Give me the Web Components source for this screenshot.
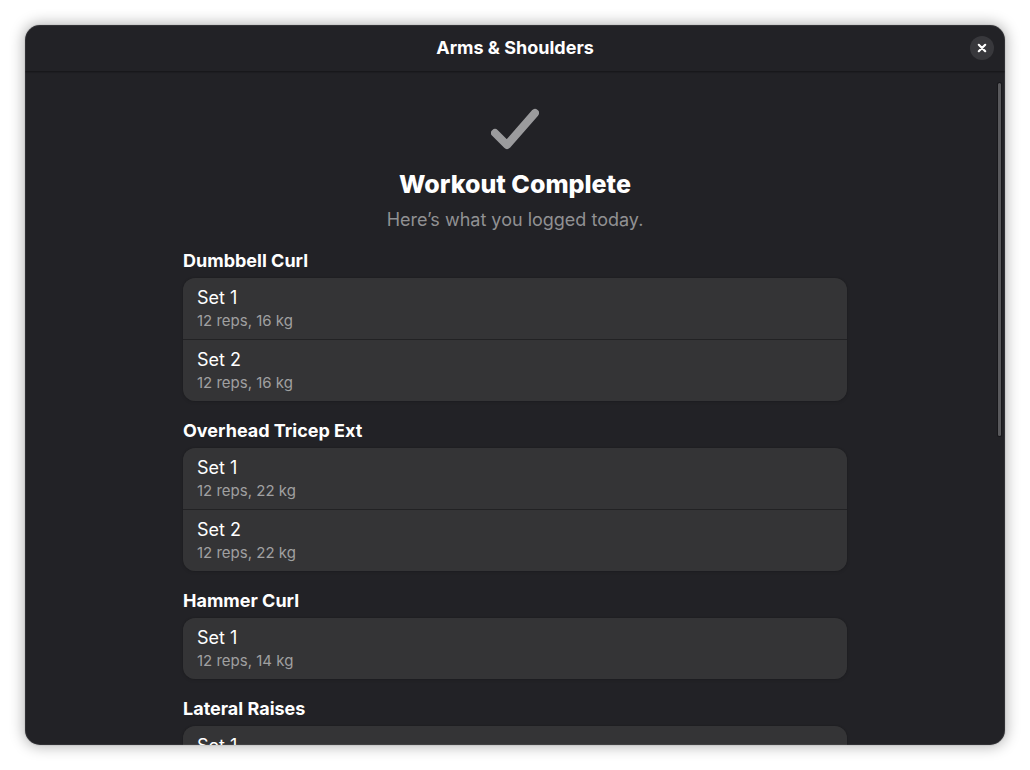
<!DOCTYPE html>
<html lang="en">
<head>
<meta charset="utf-8">
<title>Arms &amp; Shoulders</title>
<style>
    body {
        margin: 0;
        background: #fff;
        color: #fff;
        font-family: Inter, "Noto Sans", sans-serif;
        font-size: 18px;
        line-height: 24px;
    }
</style>
</head>
<body>
<app-window heading="Arms &amp; Shoulders">
    <status-header heading="Workout Complete">Here’s what you logged today.</status-header>
    <exercise-group heading="Dumbbell Curl">
        <set-row heading="Set 1">12 reps, 16 kg</set-row>
        <set-row heading="Set 2">12 reps, 16 kg</set-row>
    </exercise-group>
    <exercise-group heading="Overhead Tricep Ext">
        <set-row heading="Set 1">12 reps, 22 kg</set-row>
        <set-row heading="Set 2">12 reps, 22 kg</set-row>
    </exercise-group>
    <exercise-group heading="Hammer Curl">
        <set-row heading="Set 1">12 reps, 14 kg</set-row>
    </exercise-group>
    <exercise-group heading="Lateral Raises">
        <set-row heading="Set 1"></set-row>
    </exercise-group>
</app-window>

<script>
class AppWindow extends HTMLElement {
    constructor() {
        super();
        this.attachShadow({ mode: "open" });
    }

    connectedCallback() {
        this.shadowRoot.innerHTML = `
            <style>
                :host {
                    display: flex;
                    box-sizing: border-box;
                    height: 100vh;
                    padding: 25px;
                }

                .window {
                    position: relative;
                    flex: 1;
                    min-width: 0;
                    display: flex;
                    flex-direction: column;
                    overflow: hidden;
                    border-radius: 15px;
                    background: #222226;
                    box-shadow: 0 0 0 1px rgba(0,0,0,0.05), 0 0 14px 2px rgba(0,0,0,0.28);
                }

                .window::after {
                    content: "";
                    position: absolute;
                    inset: 0;
                    border-radius: 15px;
                    box-shadow: inset 0 0 0 1px rgba(255,255,255,0.07);
                    pointer-events: none;
                }

                header {
                    display: grid;
                    grid-template-columns: 1fr auto 1fr;
                    align-items: center;
                    height: 46px;
                    padding: 0 11px;
                    border-bottom: 1px solid #18181b;
                    box-shadow: 0 1px 1px rgba(0,0,0,0.12);
                }

                h1 {
                    grid-column: 2;
                    margin: 0;
                    font-size: 18px;
                    font-weight: 700;
                }

                button {
                    justify-self: end;
                    display: flex;
                    align-items: center;
                    justify-content: center;
                    width: 24px;
                    height: 24px;
                    padding: 0;
                    border: none;
                    border-radius: 50%;
                    background: #38383c;
                    color: #fff;
                    cursor: pointer;
                }

                button:hover {
                    background: #434347;
                }

                main {
                    flex: 1;
                    min-height: 0;
                    overflow-y: auto;
                    scrollbar-width: none;
                    padding: 0 24px;
                }

                .clamp {
                    display: flex;
                    flex-direction: column;
                    gap: 18px;
                    max-width: 664px;
                    margin: 0 auto;
                    padding: 33px 0 24px;
                }

                .thumb {
                    position: absolute;
                    top: 58px;
                    right: 4px;
                    width: 3px;
                    height: 353px;
                    border-radius: 2px;
                    background: #59595c;
                    box-shadow: 0 0 0 1px #19191c;
                }
            </style>

            <section class="window">
                <header>
                    <h1></h1>
                    <button type="button" aria-label="Close">
                        <svg width="12" height="12" viewBox="0 0 12 12" fill="none" stroke="currentColor" stroke-width="2.2" stroke-linecap="round">
                            <path d="M2.8 2.8l6.4 6.4M9.2 2.8l-6.4 6.4"/>
                        </svg>
                    </button>
                </header>
                <main><div class="clamp"><slot></slot></div></main>
                <div class="thumb"></div>
            </section>
        `;
        this.shadowRoot.querySelector("h1").textContent = this.getAttribute("heading");
        this.shadowRoot.querySelector("button").addEventListener("click", () => {
            this.dispatchEvent(new CustomEvent("close", { bubbles: true, composed: true }));
        });

        const main = this.shadowRoot.querySelector("main");
        const thumb = this.shadowRoot.querySelector(".thumb");
        main.addEventListener("scroll", () => {
            thumb.style.transform = `translateY(${main.scrollTop}px)`;
        });
    }
}

class StatusHeader extends HTMLElement {
    constructor() {
        super();
        this.attachShadow({ mode: "open" });
    }

    connectedCallback() {
        this.shadowRoot.innerHTML = `
            <style>
                :host {
                    display: flex;
                    flex-direction: column;
                    align-items: center;
                    text-align: center;
                }

                svg {
                    display: block;
                    color: #9b9b9d;
                }

                h2 {
                    margin: 15px 0 9px;
                    font-size: 25px;
                    line-height: 32px;
                    font-weight: 800;
                }

                p {
                    margin: 0;
                    color: #919193;
                    line-height: 22px;
                }
            </style>

            <svg width="48" height="48" viewBox="0 0 48 48" fill="none" stroke="currentColor" stroke-width="8" stroke-linecap="round" stroke-linejoin="round">
                <path d="M4 28l12 12L44 8"/>
            </svg>
            <h2></h2>
            <p><slot></slot></p>
        `;
        this.shadowRoot.querySelector("h2").textContent = this.getAttribute("heading");
    }
}

class ExerciseGroup extends HTMLElement {
    constructor() {
        super();
        this.attachShadow({ mode: "open" });
    }

    connectedCallback() {
        this.shadowRoot.innerHTML = `
            <style>
                :host {
                    display: block;
                }

                h3 {
                    margin: 0 0 5px;
                    font-size: 18px;
                    font-weight: 700;
                }

                .list {
                    display: flex;
                    flex-direction: column;
                    gap: 1px;
                    overflow: hidden;
                    border-radius: 12px;
                    background: #222224;
                    box-shadow: 0 0 0 1px rgba(0,0,0,0.04), 0 1px 3px 1px rgba(0,0,0,0.08);
                }
            </style>

            <h3></h3>
            <div class="list"><slot></slot></div>
        `;
        this.shadowRoot.querySelector("h3").textContent = this.getAttribute("heading");
    }
}

class SetRow extends HTMLElement {
    constructor() {
        super();
        this.attachShadow({ mode: "open" });
    }

    connectedCallback() {
        this.shadowRoot.innerHTML = `
            <style>
                :host {
                    display: block;
                    padding: 8px 14px 7px;
                    background: #343436;
                }

                .detail {
                    min-height: 22px;
                    color: #a0a0a1;
                    font-size: 15px;
                    line-height: 22px;
                }
            </style>

            <div class="title"></div>
            <div class="detail"><slot></slot></div>
        `;
        this.shadowRoot.querySelector(".title").textContent = this.getAttribute("heading");
    }
}

customElements.define("app-window", AppWindow);
customElements.define("status-header", StatusHeader);
customElements.define("exercise-group", ExerciseGroup);
customElements.define("set-row", SetRow);
</script>
</body>
</html>
